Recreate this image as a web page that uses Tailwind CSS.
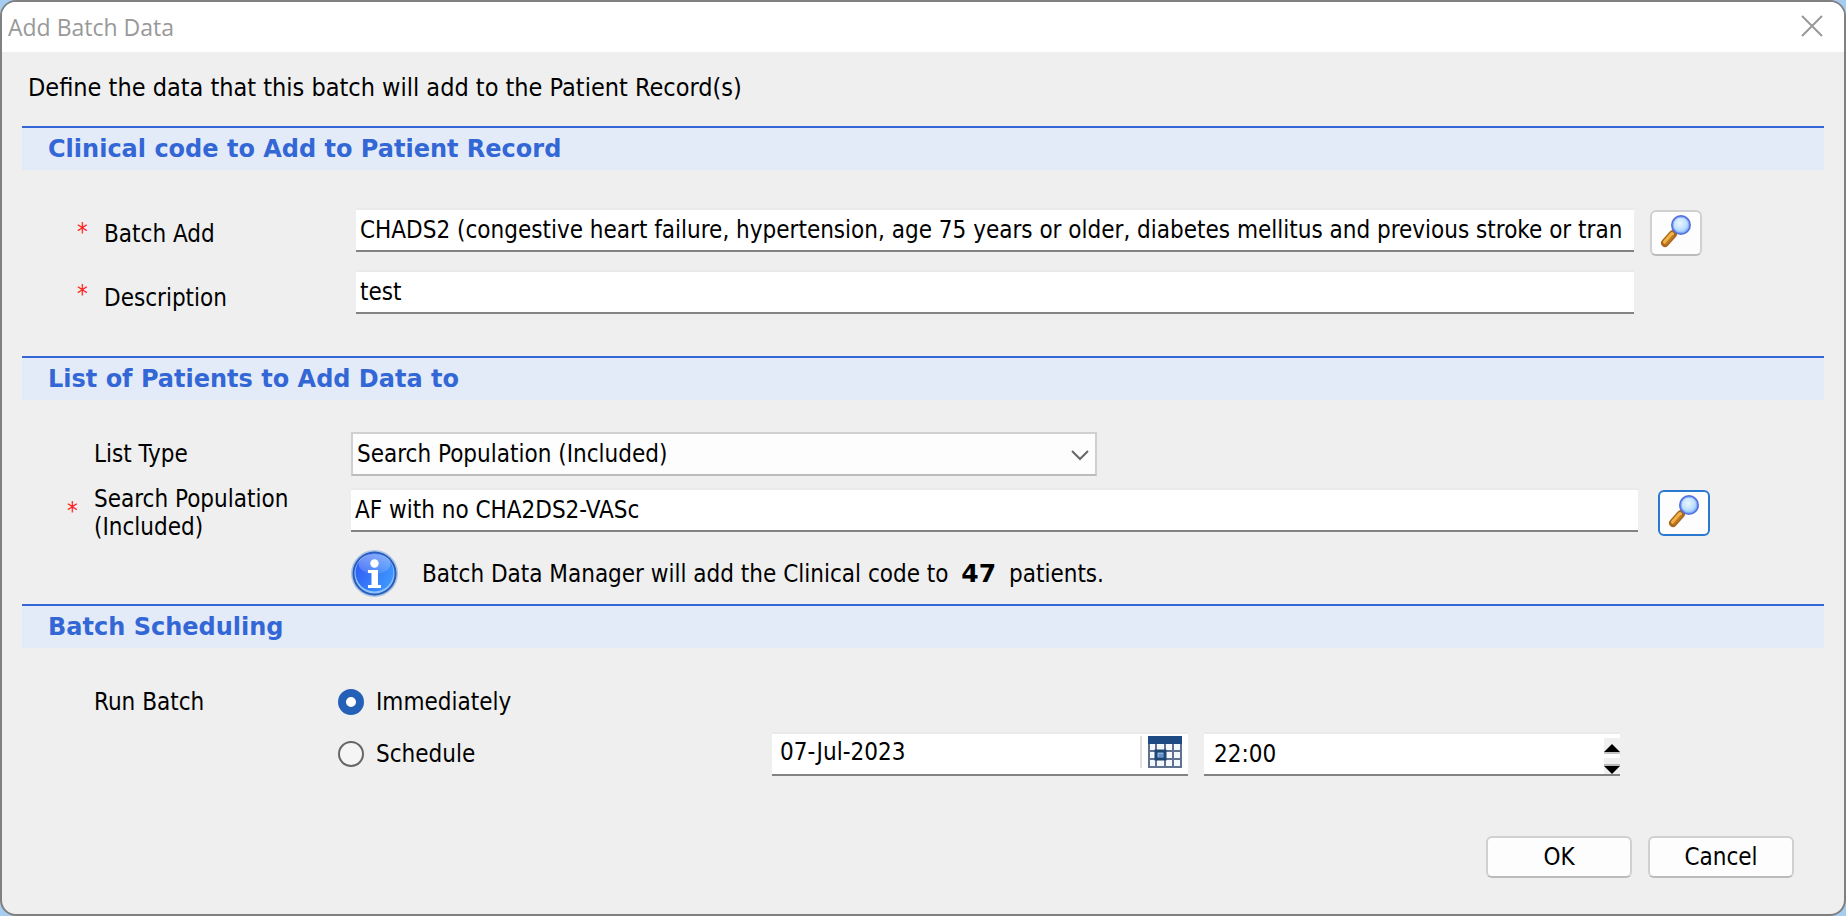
<!DOCTYPE html>
<html lang="en">

<head>
    <meta charset="UTF-8">
    <meta name="viewport" content="width=device-width, initial-scale=1.0">
    <title>Add Batch Data</title>
    <script src="https://cdn.jsdelivr.net/npm/@tailwindcss/browser@4"></script>
</head>

<body class="bg-[#a6cdf0]">
    <!-- shared icon and gradients -->
    <svg class="absolute size-0" aria-hidden="true">
        <defs>
            <radialGradient id="lens" cx="45%" cy="40%" r="60%">
                <stop offset="0" stop-color="#eaf7ff" />
                <stop offset="0.6" stop-color="#bfe0ff" />
                <stop offset="1" stop-color="#7db4ff" />
            </radialGradient>
            <linearGradient id="info" x1="0" y1="0.3" x2="1" y2="0.8">
                <stop offset="0" stop-color="#2f5cf5" />
                <stop offset="1" stop-color="#3f9cff" />
            </linearGradient>
            <linearGradient id="shine" x1="0" y1="0" x2="0" y2="1">
                <stop offset="0" stop-color="#fff" stop-opacity="0.4" />
                <stop offset="1" stop-color="#fff" stop-opacity="0.1" />
            </linearGradient>
        </defs>
        <symbol id="magnifier" viewBox="0 0 34 34">
            <path d="M16 18 L20 14" stroke="#a9a3b0" stroke-width="5" />
            <path d="M6 29 L14 20" stroke="#a9661e" stroke-width="8" stroke-linecap="round" />
            <path d="M6 28 L13 20" stroke="#f0b548" stroke-width="4" stroke-linecap="round" />
            <path d="M7 30 L14 22" stroke="#c77a20" stroke-width="2" stroke-linecap="round" />
            <circle cx="22" cy="11" r="9" fill="url(#lens)" stroke="#5570dc" stroke-width="2" />
            <circle cx="22" cy="11" r="8" fill="none" stroke="#7fa8fb" stroke-width="1" />
        </symbol>
    </svg>

    <div class="flex min-h-screen flex-col overflow-hidden rounded-2xl border-2 border-[#808080] bg-[#efefef] font-['Tahoma','DejaVu_Sans_Condensed',sans-serif] text-[24px] leading-7 text-black">
        <header class="flex h-[50px] shrink-0 items-center justify-between bg-white pr-5 pl-1.5">
            <h1 class="font-['Segoe_UI','Open_Sans',sans-serif] text-[23px] text-[#999]">Add Batch Data</h1>
            <button type="button" aria-label="Close">
                <svg class="size-6" viewBox="0 0 24 24" fill="none" stroke="#999" stroke-width="2">
                    <path d="M2 1 L22 21 M22 1 L2 21" />
                </svg>
            </button>
        </header>

        <form class="flex grow flex-col px-5">
            <p class="mt-[22px] mb-6 pl-1.5 text-[25px] leading-7">Define the data that this batch will add to the Patient Record(s)</p>

            <section>
                <h2 class="flex h-11 items-center border-t-2 border-[#3367d6] bg-[#e4ebf8] pl-[26px] font-['Verdana','DejaVu_Sans',sans-serif] font-bold text-[#3367d6]">Clinical code to Add to Patient Record</h2>
                <div class="flex flex-col gap-3.5 pt-[38px] pr-[122px] pb-[42px]">
                    <div class="flex items-start">
                        <span class="w-[82px] shrink-0 pt-2.5 pl-[55px] text-[#ff2020]">*</span>
                        <label for="batchAdd" class="w-[252px] shrink-0 pt-3">Batch Add</label>
                        <input type="text" id="batchAdd" value="CHADS2 (congestive heart failure, hypertension, age 75 years or older, diabetes mellitus and previous stroke or tran"
                            class="h-11 min-w-0 grow border-t-2 border-b-2 border-t-[#eaeaea] border-b-[#838383] bg-white px-1">
                        <button type="button" aria-label="Find clinical code"
                            class="mt-0.5 ml-4 flex h-[46px] w-[52px] shrink-0 items-start justify-center rounded-md border-2 border-[#d0d0d0] border-b-[#bbb] bg-[#fdfdfd] pt-0.5">
                            <svg class="size-[34px]" fill="none"><use href="#magnifier" /></svg>
                        </button>
                    </div>
                    <div class="flex items-start pr-[68px]">
                        <span class="w-[82px] shrink-0 pt-2.5 pl-[55px] text-[#ff2020]">*</span>
                        <label for="description" class="w-[252px] shrink-0 pt-3.5">Description</label>
                        <input type="text" id="description" value="test"
                            class="h-11 min-w-0 grow border-t-2 border-b-2 border-t-[#eaeaea] border-b-[#838383] bg-white px-1">
                    </div>
                </div>
            </section>

            <section>
                <h2 class="flex h-11 items-center border-t-2 border-[#3367d6] bg-[#e4ebf8] pl-[26px] font-['Verdana','DejaVu_Sans',sans-serif] font-bold text-[#3367d6]">List of Patients to Add Data to</h2>
                <div class="flex flex-col gap-[9px] pt-8 pr-[114px] pb-[7px]">
                    <div class="flex items-center">
                        <label for="listType" class="w-[329px] shrink-0 pl-[72px]">List Type</label>
                        <div class="relative w-full max-w-[746px]">
                            <select id="listType" class="h-11 w-full appearance-none border-2 border-[#d0d0d0] border-b-[#bbb] bg-[#fdfdfd] pl-1">
                                <option>Search Population (Included)</option>
                            </select>
                            <svg class="pointer-events-none absolute top-[18px] right-2 h-[11px] w-[18px]" viewBox="0 0 18 11" fill="none" stroke="#666" stroke-width="2">
                                <path d="M1 1 L9 9 L17 1" />
                            </svg>
                        </div>
                    </div>
                    <div class="flex items-start">
                        <span class="w-[72px] shrink-0 pt-3 pl-[45px] text-[#ff2020]">*</span>
                        <label for="searchPopulation" class="w-[257px] shrink-0 pr-10">Search Population (Included)</label>
                        <input type="text" id="searchPopulation" value="AF with no CHA2DS2-VASc"
                            class="mt-[3px] h-11 min-w-0 grow border-t-2 border-b-2 border-t-[#eaeaea] border-b-[#838383] bg-white px-1">
                        <button type="button" aria-label="Find search population"
                            class="mt-[5px] ml-5 flex h-[46px] w-[52px] shrink-0 items-start justify-center rounded-md border-2 border-[#2a78cf] bg-[#fdfdfd] pt-0.5">
                            <svg class="size-[34px]" fill="none"><use href="#magnifier" /></svg>
                        </button>
                    </div>
                    <div class="flex items-center pl-[329px]">
                        <svg class="size-[47px] shrink-0" viewBox="0 0 47 47">
                            <circle cx="23.5" cy="23.5" r="23.5" fill="#a9c1e2" />
                            <circle cx="23.5" cy="23.5" r="22" fill="#2a5cba" />
                            <circle cx="23.5" cy="23.5" r="20" fill="#8cc4ff" />
                            <circle cx="23.5" cy="22.5" r="19" fill="url(#info)" />
                            <ellipse cx="23.5" cy="14" rx="16" ry="10" fill="url(#shine)" />
                            <circle cx="23.5" cy="13.5" r="4.2" fill="#fff" />
                            <path d="M17 20 H27 V35 H30 V38 H17 V35 H20.5 V23 H17 Z" fill="#fff" />
                        </svg>
                        <p class="pl-6">Batch Data Manager will add the Clinical code to <strong class="mx-1.5 font-['Verdana','DejaVu_Sans',sans-serif] text-[25px] leading-7">47</strong> patients.</p>
                    </div>
                </div>
            </section>

            <section>
                <h2 class="flex h-11 items-center border-t-2 border-[#3367d6] bg-[#e4ebf8] pl-[26px] font-['Verdana','DejaVu_Sans',sans-serif] font-bold text-[#3367d6]">Batch Scheduling</h2>
                <div class="flex items-start pt-10" role="radiogroup" aria-labelledby="runBatch">
                    <span id="runBatch" class="w-[316px] shrink-0 pl-[72px]">Run Batch</span>
                    <div class="grow">
                        <label class="flex w-fit items-center gap-3">
                            <input type="radio" name="run" checked
                                class="size-[26px] appearance-none rounded-full border-2 border-[#666] bg-[#f5f5f5] checked:border-8 checked:border-[#2560b8] checked:bg-white">
                            Immediately
                        </label>
                        <div class="mt-4 flex items-center">
                            <label class="flex w-[434px] shrink-0 items-center gap-3">
                                <input type="radio" name="run"
                                    class="size-[26px] appearance-none rounded-full border-2 border-[#666] bg-[#f5f5f5] checked:border-8 checked:border-[#2560b8] checked:bg-white">
                                Schedule
                            </label>
                            <div class="flex h-11 w-full max-w-[416px] items-start border-t-2 border-b-2 border-t-[#eaeaea] border-b-[#838383] bg-white">
                                <input type="text" aria-label="Date" value="07-Jul-2023" class="h-[36px] min-w-0 grow pl-2">
                                <button type="button" aria-label="Open calendar" class="mt-0.5 mr-1.5 border-l-2 border-[#e0e0e0] pl-1.5">
                                    <svg class="h-8 w-[34px]" viewBox="0 0 34 32">
                                        <rect width="34" height="32" fill="#f4f8fc" />
                                        <rect width="34" height="8" fill="#1d4a82" />
                                        <path d="M1 8 V32 M8 8 V32 M17 8 V32 M25 8 V32 M33 8 V32 M0 15 H34 M0 23 H34 M0 31 H34" stroke="#5f7390" stroke-width="2" fill="none" />
                                        <rect x="8" y="15" width="9" height="8" fill="#8db4df" stroke="#1f4673" stroke-width="3" />
                                        <rect x="11" y="18" width="4" height="3" fill="#5f92cc" />
                                    </svg>
                                </button>
                            </div>
                            <div class="ml-4 flex h-11 w-full max-w-[416px] border-t-2 border-b-2 border-t-[#eaeaea] border-b-[#838383] bg-white">
                                <input type="text" aria-label="Time" value="22:00" class="min-w-0 grow pl-2.5">
                                <div class="flex flex-col gap-1 pt-1">
                                    <button type="button" aria-label="Later" class="h-4 w-4 border-b-2 border-[#c4c4c4] bg-[#f0f0f0]">
                                        <svg class="h-3.5 w-4" viewBox="0 0 16 14"><path d="M0 14 L8 6 L16 14 Z" /></svg>
                                    </button>
                                    <button type="button" aria-label="Earlier" class="h-4 w-4 bg-[#f0f0f0]">
                                        <svg class="size-4" viewBox="0 0 16 16"><path d="M0 6 H16 V8 H0 Z" fill="#b8b8b8" /><path d="M0 8 L8 16 L16 8 Z" /></svg>
                                    </button>
                                </div>
                            </div>
                            <div class="w-[204px] shrink-0"></div>
                        </div>
                    </div>
                </div>
            </section>

            <footer class="mt-auto flex justify-end gap-4 pt-8 pr-[30px] pb-9">
                <button type="submit" class="h-[42px] w-[146px] rounded-md border-2 border-[#d0d0d0] border-b-[#bbb] bg-[#fdfdfd]">OK</button>
                <button type="button" class="h-[42px] w-[146px] rounded-md border-2 border-[#d0d0d0] border-b-[#bbb] bg-[#fdfdfd]">Cancel</button>
            </footer>
        </form>
    </div>
</body>

</html>
